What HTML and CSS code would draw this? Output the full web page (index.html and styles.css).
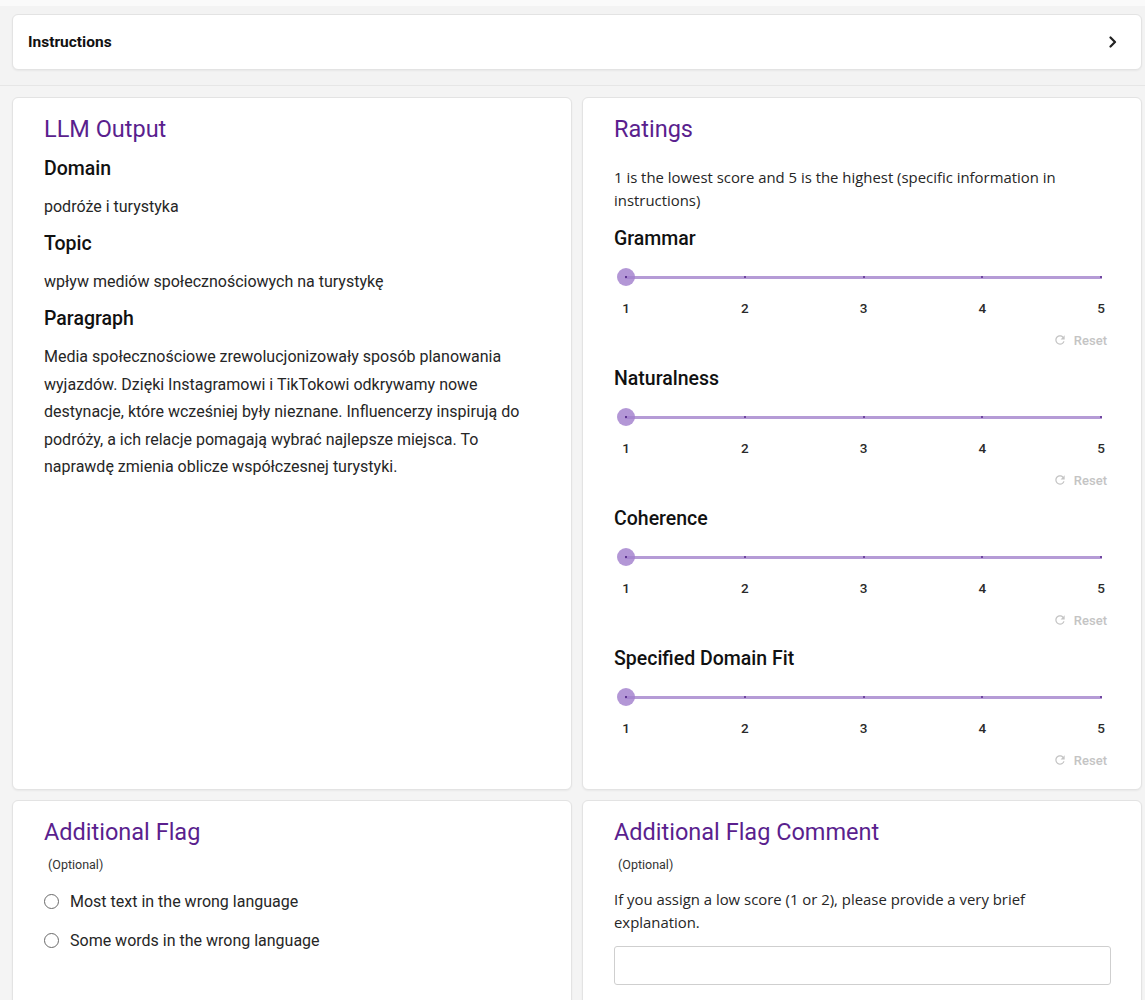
FILE: index.html
```html
<!DOCTYPE html>
<html lang="en">
<head>
<meta charset="utf-8">
<title>Annotation task</title>
<link rel="stylesheet" href="styles.css">
</head>
<body>
<div class="page">
  <div class="card instructions">
    <span class="instructions-title">Instructions</span>
    <svg class="chevron" width="8" height="12" viewBox="0 0 8 12"><path d="M1.5 1.5 L6 6 L1.5 10.5" fill="none" stroke="#222" stroke-width="2.2" stroke-linecap="round" stroke-linejoin="round"/></svg>
  </div>

  <div class="main">
    <div class="grid">
      <section class="card panel">
        <h2 class="panel-title">LLM Output</h2>
        <h3 class="field-title">Domain</h3>
        <p class="field-text">podróże i turystyka</p>
        <h3 class="field-title">Topic</h3>
        <p class="field-text">wpływ mediów społecznościowych na turystykę</p>
        <h3 class="field-title">Paragraph</h3>
        <p class="paragraph">Media społecznościowe zrewolucjonizowały sposób planowania wyjazdów. Dzięki Instagramowi i TikTokowi odkrywamy nowe destynacje, które wcześniej były nieznane. Influencerzy inspirują do podróży, a ich relacje pomagają wybrać najlepsze miejsca. To naprawdę zmienia oblicze współczesnej turystyki.</p>
      </section>

      <section class="card panel ratings">
        <h2 class="panel-title">Ratings</h2>
        <p class="hint">1 is the lowest score and 5 is the highest (specific information in instructions)</p>

        <div class="rating">
          <h3 class="field-title">Grammar</h3>
          <div class="slider">
            <div class="track"><i></i><i></i><i></i><i></i><i></i></div>
            <span class="thumb"></span>
          </div>
          <div class="scale"><span>1</span><span>2</span><span>3</span><span>4</span><span>5</span></div>
          <div class="reset"><svg width="14" height="14" viewBox="0 0 24 24"><path fill="#c4c4c4" d="M17.65 6.35C16.2 4.9 14.21 4 12 4c-4.42 0-7.99 3.58-7.99 8s3.57 8 7.99 8c3.73 0 6.84-2.55 7.73-6h-2.08c-.82 2.33-3.04 4-5.65 4-3.31 0-6-2.69-6-6s2.69-6 6-6c1.66 0 3.14.69 4.22 1.78L13 11h7V4l-2.35 2.35z"/></svg><span>Reset</span></div>
        </div>

        <div class="rating">
          <h3 class="field-title">Naturalness</h3>
          <div class="slider">
            <div class="track"><i></i><i></i><i></i><i></i><i></i></div>
            <span class="thumb"></span>
          </div>
          <div class="scale"><span>1</span><span>2</span><span>3</span><span>4</span><span>5</span></div>
          <div class="reset"><svg width="14" height="14" viewBox="0 0 24 24"><path fill="#c4c4c4" d="M17.65 6.35C16.2 4.9 14.21 4 12 4c-4.42 0-7.99 3.58-7.99 8s3.57 8 7.99 8c3.73 0 6.84-2.55 7.73-6h-2.08c-.82 2.33-3.04 4-5.650 4-3.31 0-6-2.69-6-6s2.69-6 6-6c1.66 0 3.14.69 4.22 1.78L13 11h7V4l-2.35 2.35z"/></svg><span>Reset</span></div>
        </div>

        <div class="rating">
          <h3 class="field-title">Coherence</h3>
          <div class="slider">
            <div class="track"><i></i><i></i><i></i><i></i><i></i></div>
            <span class="thumb"></span>
          </div>
          <div class="scale"><span>1</span><span>2</span><span>3</span><span>4</span><span>5</span></div>
          <div class="reset"><svg width="14" height="14" viewBox="0 0 24 24"><path fill="#c4c4c4" d="M17.65 6.35C16.2 4.9 14.21 4 12 4c-4.42 0-7.99 3.58-7.99 8s3.57 8 7.99 8c3.73 0 6.84-2.55 7.73-6h-2.08c-.82 2.33-3.04 4-5.65 4-3.31 0-6-2.69-6-6s2.69-6 6-6c1.66 0 3.14.69 4.22 1.78L13 11h7V4l-2.35 2.35z"/></svg><span>Reset</span></div>
        </div>

        <div class="rating">
          <h3 class="field-title">Specified Domain Fit</h3>
          <div class="slider">
            <div class="track"><i></i><i></i><i></i><i></i><i></i></div>
            <span class="thumb"></span>
          </div>
          <div class="scale"><span>1</span><span>2</span><span>3</span><span>4</span><span>5</span></div>
          <div class="reset"><svg width="14" height="14" viewBox="0 0 24 24"><path fill="#c4c4c4" d="M17.65 6.35C16.2 4.9 14.21 4 12 4c-4.42 0-7.99 3.58-7.99 8s3.57 8 7.99 8c3.73 0 6.84-2.55 7.73-6h-2.08c-.82 2.33-3.04 4-5.65 4-3.31 0-6-2.69-6-6s2.69-6 6-6c1.66 0 3.14.69 4.22 1.78L13 11h7V4l-2.35 2.35z"/></svg><span>Reset</span></div>
        </div>
      </section>

      <section class="card panel lower">
        <h2 class="panel-title">Additional Flag</h2>
        <p class="optional">(Optional)</p>
        <div class="options">
          <label class="option"><span class="radio"></span>Most text in the wrong language</label>
          <label class="option"><span class="radio"></span>Some words in the wrong language</label>
        </div>
      </section>

      <section class="card panel lower">
        <h2 class="panel-title">Additional Flag Comment</h2>
        <p class="optional">(Optional)</p>
        <p class="hint comment-hint">If you assign a low score (1 or 2), please provide a very brief explanation.</p>
        <div class="text-input"></div>
      </section>
    </div>
  </div>
</div>
</body>
</html>
```

FILE: styles.css
```css
* { box-sizing: border-box; }

html, body {
  margin: 0;
  padding: 0;
}

body {
  background: #f3f3f3;
  font-family: Roboto, "Liberation Sans", sans-serif;
  color: #1a1a1a;
  overflow: hidden;
}

.page {
  padding: 14px 3px 0 12px;
  border-top: 6px solid #fafafa;
}

.card {
  background: #fff;
  border: 1px solid #e3e3e3;
  border-radius: 6px;
  box-shadow: 0 1px 2px rgba(0, 0, 0, 0.05);
}

/* collapsible instructions bar */
.instructions {
  height: 56px;
  display: flex;
  align-items: center;
  justify-content: space-between;
  padding: 0 24px 0 15px;
  margin-top: -6px;
}

.instructions-title {
  font-size: 15.5px;
  font-weight: 700;
  color: #111;
}

.chevron { display: block; }

.main {
  margin-top: 15px;
  margin-left: -12px;
  margin-right: -3px;
  border-top: 1px solid #e6e6e6;
  background: #f4f4f4;
  padding: 11px 3px 0 12px;
}

.grid {
  display: grid;
  grid-template-columns: 1fr 1fr;
  column-gap: 10px;
  row-gap: 10px;
}

.panel {
  padding: 16px 31px 21px 31px;
}

.panel-title {
  margin: 0;
  font-size: 23.5px;
  font-weight: 400;
  line-height: 30px;
  color: #5a1f8e;
}

.field-title {
  margin: 12px 0 0;
  font-size: 19.5px;
  font-weight: 500;
  line-height: 26px;
  color: #111;
}

.field-text {
  margin: 13px 0 0;
  font-size: 16px;
  line-height: 24px;
  color: #262626;
}

.paragraph {
  margin: 11px 0 0;
  font-size: 16px;
  line-height: 27.5px;
  color: #262626;
}

.hint {
  margin: 22px 0 0;
  font-family: "Open Sans", "Liberation Sans", sans-serif;
  font-size: 14.9px;
  line-height: 23px;
  color: #262626;
}

.rating .field-title { margin-top: 14px; }
.rating + .rating .field-title { margin-top: 18px; }

/* discrete slider */
.slider {
  position: relative;
  height: 20px;
  margin: 15px 9px 0 12px;
  display: flex;
  align-items: center;
}

.track {
  flex: 1;
  height: 3px;
  background: #b59bd6;
  display: flex;
  justify-content: space-between;
  align-items: center;
  margin: 0 -1px;
}

.track i {
  display: block;
  width: 2px;
  height: 2px;
  border-radius: 50%;
  background: #5a2a8e;
}

.thumb {
  position: absolute;
  left: -9px;
  top: 1px;
  width: 18px;
  height: 18px;
  border-radius: 50%;
  background: rgba(162, 128, 205, 0.82);
}

.thumb::after {
  content: "";
  position: absolute;
  left: 8px;
  top: 8px;
  width: 2px;
  height: 2px;
  border-radius: 50%;
  background: #4a1f7e;
}

.scale {
  display: flex;
  justify-content: space-between;
  margin: 13px 1px 0 4px;
  font-size: 13.5px;
  font-weight: 500;
  line-height: 16px;
  color: #2a2a2a;
}

.scale span {
  width: 16px;
  text-align: center;
}

.reset {
  margin-top: 16px;
  display: flex;
  justify-content: flex-end;
  align-items: center;
  gap: 7px;
  height: 16px;
  padding-right: 3px;
  font-size: 13px;
  font-weight: 500;
  color: #c4c4c4;
}

.reset svg { display: block; }

/* lower panels */
.lower {
  min-height: 230px;
}

.optional {
  margin: 10px 0 0 4px;
  font-size: 12.5px;
  line-height: 16px;
  color: #333;
}

.options {
  margin-top: 16px;
  display: flex;
  flex-direction: column;
  gap: 15px;
}

.option {
  display: flex;
  align-items: center;
  height: 24px;
  font-size: 16px;
  color: #262626;
}

.radio {
  width: 15px;
  height: 15px;
  border: 1.6px solid #6a6a6a;
  border-radius: 50%;
  margin-right: 11px;
  flex: none;
}

.comment-hint {
  margin-top: 14.5px;
}

.text-input {
  margin-top: 12.5px;
  height: 39px;
  border: 1px solid #cfcfcf;
  border-radius: 3px;
  margin-right: -1px;
}
```
